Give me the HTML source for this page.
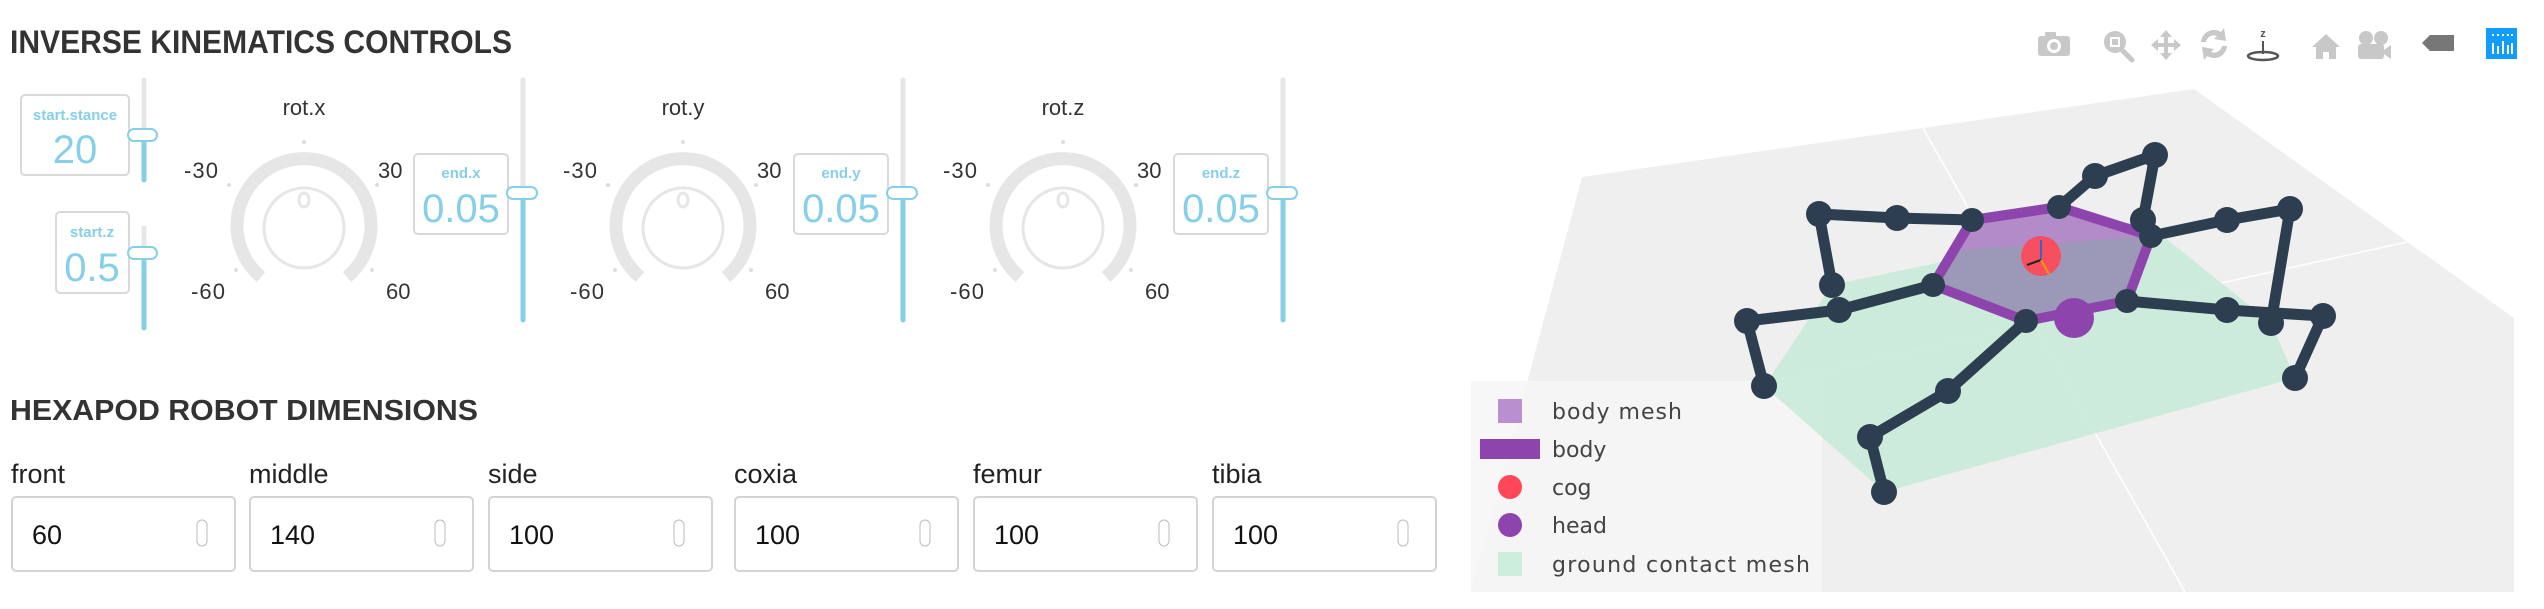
<!DOCTYPE html>
<html><head><meta charset="utf-8"><style>
html,body{margin:0;padding:0;background:#fff;width:2544px;height:609px;overflow:hidden}
svg{display:block}
text{font-family:"Liberation Sans",sans-serif}
</style></head><body>
<svg width="2544" height="609" viewBox="0 0 2544 609" xmlns="http://www.w3.org/2000/svg">
<defs>
<g id="knob">
  <path d="M -43 277 A 67 67 0 1 1 43 277" fill="none" stroke="#e6e6e6" stroke-width="13"/>
  <circle cx="0" cy="228" r="40" fill="none" stroke="#e6e6e6" stroke-width="3"/>
  <ellipse cx="0" cy="200" rx="5" ry="7" fill="none" stroke="#e6e6e6" stroke-width="3"/>
  <circle cx="0" cy="142" r="2" fill="#ddd"/>
  <circle cx="-75" cy="185" r="2" fill="#ddd"/>
  <circle cx="73" cy="185" r="2" fill="#ddd"/>
  <circle cx="-68" cy="270" r="2" fill="#ddd"/>
  <circle cx="68" cy="270" r="2" fill="#ddd"/>
  <text x="-120" y="178" font-size="22" fill="#333" textLength="34">-30</text>
  <text x="74" y="178" font-size="22" fill="#333">30</text>
  <text x="-113" y="299" font-size="22" fill="#333" textLength="34">-60</text>
  <text x="82" y="299" font-size="22" fill="#333">60</text>
</g>
</defs>

<text x="10" y="53" font-size="32" font-weight="bold" fill="#333" textLength="502" lengthAdjust="spacingAndGlyphs">INVERSE KINEMATICS CONTROLS</text>

<rect x="21" y="95" width="108" height="80" rx="4" fill="#fff" stroke="#d9d9d9" stroke-width="2"/>
<text x="75" y="120" font-size="15" font-weight="bold" fill="#85cfe8" text-anchor="middle">start.stance</text>
<text x="75" y="163" font-size="40" fill="#85cfe8" text-anchor="middle">20</text>
<line x1="144" y1="80" x2="144" y2="180" stroke="#e6e6e6" stroke-width="5" stroke-linecap="round"/>
<line x1="144" y1="135" x2="144" y2="180" stroke="#85cfe8" stroke-width="5" stroke-linecap="round"/>
<rect x="128" y="129" width="29" height="12" rx="6" fill="#fff" stroke="#85cfe8" stroke-width="2"/>

<rect x="56" y="212" width="73" height="81" rx="4" fill="#fff" stroke="#d9d9d9" stroke-width="2"/>
<text x="92" y="237" font-size="15" font-weight="bold" fill="#85cfe8" text-anchor="middle">start.z</text>
<text x="92" y="281" font-size="40" fill="#85cfe8" text-anchor="middle">0.5</text>
<line x1="144" y1="228" x2="144" y2="328" stroke="#e6e6e6" stroke-width="5" stroke-linecap="round"/>
<line x1="144" y1="253" x2="144" y2="328" stroke="#85cfe8" stroke-width="5" stroke-linecap="round"/>
<rect x="128" y="247" width="29" height="12" rx="6" fill="#fff" stroke="#85cfe8" stroke-width="2"/>

<g transform="translate(304,0)">
  <text x="0" y="115" font-size="22" fill="#333" text-anchor="middle">rot.x</text>
  <use href="#knob"/>
</g>
<g transform="translate(683,0)">
  <text x="0" y="115" font-size="22" fill="#333" text-anchor="middle">rot.y</text>
  <use href="#knob"/>
</g>
<g transform="translate(1063,0)">
  <text x="0" y="115" font-size="22" fill="#333" text-anchor="middle">rot.z</text>
  <use href="#knob"/>
</g>

<g transform="translate(0,0)">
<rect x="414" y="154" width="94" height="80" rx="4" fill="#fff" stroke="#d9d9d9" stroke-width="2"/>
<text x="461" y="178" font-size="15" font-weight="bold" fill="#85cfe8" text-anchor="middle">end.x</text>
<text x="461" y="222" font-size="40" fill="#85cfe8" text-anchor="middle">0.05</text>
<line x1="523" y1="80" x2="523" y2="320" stroke="#e6e6e6" stroke-width="5" stroke-linecap="round"/>
<line x1="523" y1="193" x2="523" y2="320" stroke="#85cfe8" stroke-width="5" stroke-linecap="round"/>
<rect x="507" y="187" width="30" height="12" rx="6" fill="#fff" stroke="#85cfe8" stroke-width="2"/>
</g>
<g transform="translate(380,0)">
<rect x="414" y="154" width="94" height="80" rx="4" fill="#fff" stroke="#d9d9d9" stroke-width="2"/>
<text x="461" y="178" font-size="15" font-weight="bold" fill="#85cfe8" text-anchor="middle">end.y</text>
<text x="461" y="222" font-size="40" fill="#85cfe8" text-anchor="middle">0.05</text>
<line x1="523" y1="80" x2="523" y2="320" stroke="#e6e6e6" stroke-width="5" stroke-linecap="round"/>
<line x1="523" y1="193" x2="523" y2="320" stroke="#85cfe8" stroke-width="5" stroke-linecap="round"/>
<rect x="507" y="187" width="30" height="12" rx="6" fill="#fff" stroke="#85cfe8" stroke-width="2"/>
</g>
<g transform="translate(760,0)">
<rect x="414" y="154" width="94" height="80" rx="4" fill="#fff" stroke="#d9d9d9" stroke-width="2"/>
<text x="461" y="178" font-size="15" font-weight="bold" fill="#85cfe8" text-anchor="middle">end.z</text>
<text x="461" y="222" font-size="40" fill="#85cfe8" text-anchor="middle">0.05</text>
<line x1="523" y1="80" x2="523" y2="320" stroke="#e6e6e6" stroke-width="5" stroke-linecap="round"/>
<line x1="523" y1="193" x2="523" y2="320" stroke="#85cfe8" stroke-width="5" stroke-linecap="round"/>
<rect x="507" y="187" width="30" height="12" rx="6" fill="#fff" stroke="#85cfe8" stroke-width="2"/>
</g>

<text x="10" y="420" font-size="29" font-weight="bold" fill="#333" textLength="468" lengthAdjust="spacingAndGlyphs">HEXAPOD ROBOT DIMENSIONS</text>
<g font-size="27" fill="#222">
<text x="11" y="483">front</text><text x="249" y="483">middle</text><text x="488" y="483">side</text>
<text x="734" y="483">coxia</text><text x="973" y="483">femur</text><text x="1212" y="483">tibia</text>
</g>
<g fill="#fff" stroke="#d4d4d4" stroke-width="2">
<rect x="12" y="497" width="223" height="74" rx="4"/><rect x="250" y="497" width="223" height="74" rx="4"/>
<rect x="489" y="497" width="223" height="74" rx="4"/><rect x="735" y="497" width="223" height="74" rx="4"/>
<rect x="974" y="497" width="223" height="74" rx="4"/><rect x="1213" y="497" width="223" height="74" rx="4"/>
</g>
<g font-size="27" fill="#111">
<text x="32" y="544">60</text><text x="270" y="544">140</text><text x="509" y="544">100</text>
<text x="755" y="544">100</text><text x="994" y="544">100</text><text x="1233" y="544">100</text>
</g>
<g fill="#fff" stroke="#bbb" stroke-width="1">
<rect x="197" y="520" width="10" height="26" rx="5"/><rect x="435" y="520" width="10" height="26" rx="5"/>
<rect x="674" y="520" width="10" height="26" rx="5"/><rect x="920" y="520" width="10" height="26" rx="5"/>
<rect x="1159" y="520" width="10" height="26" rx="5"/><rect x="1398" y="520" width="10" height="26" rx="5"/>
</g>

<polygon points="1582,177 2194,89 2514,318 2514,592 1471,592" fill="#efefef"/>
<line x1="1923" y1="128" x2="2185" y2="592" stroke="#fff" stroke-width="1.5"/>
<line x1="1765" y1="384" x2="2407" y2="242" stroke="#fff" stroke-width="1.5"/>
<rect x="1471" y="381" width="351" height="211" fill="#f6f6f6" opacity="0.85"/>
<polygon points="1832,285 2143,220 2271,323 2295,378 1884,492 1764,386" fill="#c6ead6" opacity="0.85"/>
<polygon points="1972,220 2059,207 2151,236 2127,301 2026,321 1933,285" fill="#9b98b8"/>
<polygon points="1972,220 2059,207 2151,236 1960,250" fill="#b38bc8"/>
<polyline points="1972,220 2059,207 2151,236 2127,301 2026,321 1933,285 1972,220" fill="none" stroke="#8e44ad" stroke-width="10" stroke-linejoin="round"/>
<g stroke="#2c3e50" stroke-width="11" fill="none" stroke-linejoin="round" stroke-linecap="round">
<polyline points="1972,220 1897,218 1819,214 1832,285"/>
<polyline points="2059,207 2095,176 2155,155 2143,220"/>
<polyline points="2151,236 2227,220 2290,209 2271,323"/>
<polyline points="2127,301 2227,310 2323,316 2295,378"/>
<polyline points="2026,321 1948,391 1870,437 1884,492"/>
<polyline points="1933,285 1839,310 1747,321 1764,386"/>
</g>
<g fill="#2c3e50">
<circle cx="1972" cy="220" r="12"/><circle cx="1897" cy="218" r="13"/><circle cx="1819" cy="214" r="13"/><circle cx="1832" cy="285" r="13"/>
<circle cx="2059" cy="207" r="12"/><circle cx="2095" cy="176" r="13"/><circle cx="2155" cy="155" r="13"/><circle cx="2143" cy="220" r="13"/>
<circle cx="2151" cy="236" r="12"/><circle cx="2227" cy="220" r="13"/><circle cx="2290" cy="209" r="13"/><circle cx="2271" cy="323" r="13"/>
<circle cx="2127" cy="301" r="12"/><circle cx="2227" cy="310" r="13"/><circle cx="2323" cy="316" r="13"/><circle cx="2295" cy="378" r="13"/>
<circle cx="2026" cy="321" r="12"/><circle cx="1948" cy="391" r="13"/><circle cx="1870" cy="437" r="13"/><circle cx="1884" cy="492" r="13"/>
<circle cx="1933" cy="285" r="12"/><circle cx="1839" cy="310" r="13"/><circle cx="1747" cy="321" r="13"/><circle cx="1764" cy="386" r="13"/>
</g>
<circle cx="2074" cy="318" r="20" fill="#8e44ad"/>
<circle cx="2041" cy="256" r="20" fill="#ff4757" opacity="0.9"/>
<line x1="2041" y1="240" x2="2041" y2="260" stroke="#36c" stroke-width="2"/>
<line x1="2041" y1="260" x2="2027" y2="265" stroke="#222" stroke-width="2"/>
<line x1="2041" y1="260" x2="2049" y2="274" stroke="#e90" stroke-width="2"/>

<rect x="1498" y="399" width="24" height="24" fill="#b98fd0"/>
<rect x="1480" y="439" width="60" height="20" fill="#8e44ad"/>
<ellipse cx="1510" cy="487" rx="12" ry="12" fill="#ff4757"/>
<ellipse cx="1510" cy="525" rx="12" ry="12" fill="#8e44ad"/>
<rect x="1498" y="552" width="24" height="24" fill="#cdeedb"/>
<g font-size="22" fill="#444">
<text x="1552" y="419" style="font-family:'DejaVu Sans',sans-serif" textLength="130">body mesh</text>
<text x="1552" y="457" style="font-family:'DejaVu Sans',sans-serif">body</text>
<text x="1552" y="495" style="font-family:'DejaVu Sans',sans-serif">cog</text>
<text x="1552" y="533" style="font-family:'DejaVu Sans',sans-serif">head</text>
<text x="1552" y="572" style="font-family:'DejaVu Sans',sans-serif" textLength="258">ground contact mesh</text>
</g>

<g fill="#c8c8c8">
<rect x="2038" y="36" width="32" height="20" rx="3"/><rect x="2045" y="32" width="11" height="6" rx="1"/>
<circle cx="2054" cy="46" r="7" fill="#fff"/><circle cx="2054" cy="46" r="4"/>
<circle cx="2115" cy="42" r="11"/><rect x="2110" y="37" width="10" height="10" fill="#fff"/><rect x="2112" y="39" width="6" height="6"/>
<line x1="2122" y1="50" x2="2132" y2="60" stroke="#c8c8c8" stroke-width="5" stroke-linecap="round"/>
<path d="M2166 30 l6 7 h-4 v6 h6 v-4 l7 6 -7 6 v-4 h-6 v6 h4 l-6 7 -6 -7 h4 v-6 h-6 v4 l-7 -6 7 -6 v4 h6 v-6 h-4z"/>
<path d="M2201 42 a13 13 0 0 1 20 -10 l3 -4 2 13 -12 -2 3 -3 a8 8 0 0 0 -11 6z M2227 46 a13 13 0 0 1 -20 10 l-3 4 -2 -13 12 2 -3 3 a8 8 0 0 0 11 -6z"/>
<path d="M2312 47 l14 -13 14 13 h-4 v12 h-7 v-7 h-6 v7 h-7 v-12z"/>
<circle cx="2366" cy="38" r="7"/><circle cx="2381" cy="38" r="7"/><rect x="2358" y="44" width="26" height="15" rx="3"/><path d="M2384 50 l7 -5 v14 l-7 -5z"/>
</g>
<g fill="#555"><text x="2263" y="37" font-size="11" font-weight="bold" text-anchor="middle">z</text>
<line x1="2263" y1="41" x2="2263" y2="54" stroke="#555" stroke-width="2"/>
<ellipse cx="2263" cy="56" rx="15" ry="4" fill="none" stroke="#555" stroke-width="2.5"/></g>
<path d="M2422 43 l8 -8 h24 v16 h-24z" fill="#777"/>
<rect x="2486" y="28" width="31" height="31" fill="#119dff"/>
<g fill="#fff"><rect x="2492" y="43" width="2" height="11"/><rect x="2497" y="46" width="2" height="8"/><rect x="2502" y="41" width="2" height="13"/><rect x="2507" y="45" width="2" height="9"/><rect x="2511" y="43" width="2" height="11"/>
<rect x="2492" y="34" width="2" height="2"/><rect x="2497" y="34" width="2" height="2"/><rect x="2502" y="34" width="2" height="2"/><rect x="2507" y="34" width="2" height="2"/><rect x="2511" y="34" width="2" height="2"/></g>
</svg>
</body></html>
